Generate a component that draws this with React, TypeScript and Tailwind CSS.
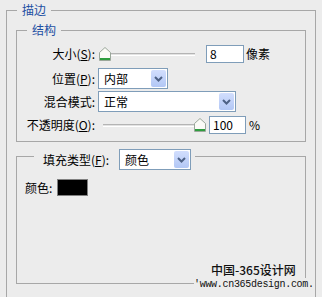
import React from 'react';

const FONT = { fontFamily: '"Noto Sans CJK SC", "Noto Sans", sans-serif' };

const Chevron = () => (
  <svg width="9" height="6" viewBox="0 0 9 6">
    <path d="M1 1 L4.5 4.5 L8 1" fill="none" stroke="#4d6185" strokeWidth="2" />
  </svg>
);

const Select: React.FC<{ value: string; width: string }> = ({ value, width }) => (
  <div className={`flex h-[21px] ${width} shrink-0 border border-[#7f9db9] bg-white`}>
    <span className="flex-1 pl-[5px] text-[12px] leading-[19px] text-black">{value}</span>
    <div className="m-px flex w-[15px] items-center justify-center rounded-[2px] bg-gradient-to-b from-[#d2defd] to-[#b2c7f5]">
      <Chevron />
    </div>
  </div>
);

const Thumb = () => (
  <svg width="12" height="14" viewBox="0 0 12 14">
    <path d="M0.5 5.5 L6 0.5 L11.5 5.5 L11.5 13.5 L0.5 13.5 Z" fill="#fbfbf7" stroke="#9aa79a" />
    <rect x="1" y="11" width="10" height="2" fill="#2f9d3f" />
  </svg>
);

const Input: React.FC<{ value: string; width: string }> = ({ value, width }) => (
  <div className={`h-[18px] ${width} shrink-0 border border-[#7f9db9] bg-white pl-[3px] text-[12px] leading-[16px] text-black`}>
    {value}
  </div>
);

const Track: React.FC<{ width: string }> = ({ width }) => (
  <div className={`${width} h-[3px] border-t border-[#b4b4b4] border-b border-b-white bg-[#e2e2e2]`} />
);

const App: React.FC = () => {
  return (
    <div
      className="relative h-[297px] w-[322px] overflow-hidden bg-[#ececec] px-[6px] pt-[3px] text-[12px] text-black"
      style={FONT}
    >
      <fieldset className="h-[330px] border border-[#a7a7a7] px-[9px] pt-[6px]">
        <legend className="ml-[1px] px-[5px] text-[12px] leading-[14px] text-[#1d4fa3]">描边</legend>

        {/* 结构 */}
        <fieldset className="border border-[#a7a7a7] pt-[8px] pb-[7px]">
          <legend className="ml-[10px] px-[5px] text-[12px] leading-[14px] text-[#1d4fa3]">结构</legend>

          <div className="flex h-[18px] items-center">
            <span className="w-[78px] text-right">
              大小(<span className="underline">S</span>):
            </span>
            <div className="relative ml-[4px] flex h-[18px] w-[96px] items-center">
              <Track width="w-full" />
              <div className="absolute left-0 top-[2px]">
                <Thumb />
              </div>
            </div>
            <div className="ml-[11px]">
              <Input value="8" width="w-[38px]" />
            </div>
            <span className="ml-[2px]">像素</span>
          </div>

          <div className="mt-[5px] flex h-[21px] items-center">
            <span className="w-[78px] text-right">
              位置(<span className="underline">P</span>):
            </span>
            <div className="ml-[3px]">
              <Select value="内部" width="w-[70px]" />
            </div>
          </div>

          <div className="mt-[2px] flex h-[21px] items-center">
            <span className="w-[78px] text-right">混合模式:</span>
            <div className="ml-[3px]">
              <Select value="正常" width="w-[138px]" />
            </div>
          </div>

          <div className="mt-[4px] flex h-[18px] items-center">
            <span className="w-[78px] whitespace-nowrap text-right">
              不透明度(<span className="underline">O</span>):
            </span>
            <div className="relative ml-[8px] flex h-[18px] w-[103px] items-center">
              <Track width="w-[97px]" />
              <div className="absolute right-0 top-[2px]">
                <Thumb />
              </div>
            </div>
            <div className="ml-[3px]">
              <Input value="100" width="w-[37px]" />
            </div>
            <span className="ml-[3px]">%</span>
          </div>
        </fieldset>

        {/* 填充类型 */}
        <fieldset className="mt-[7px] h-[135px] border border-[#a7a7a7] pt-[16px] pl-[8px]">
          <legend className="ml-[9px] h-[14px] pl-[9px] pr-[4px]">
            <div className="flex h-[21px] items-center">
              <span className="w-[60px] whitespace-nowrap">
                填充类型(<span className="underline">F</span>):
              </span>
              <div className="ml-[16px]">
                <Select value="颜色" width="w-[72px]" />
              </div>
            </div>
          </legend>
          <div className="flex h-[17px] items-center">
            <span>颜色:</span>
            <div className="ml-[5px] h-[17px] w-[31px] border border-[#808080] bg-black" />
          </div>
        </fieldset>
      </fieldset>

      {/* watermark */}
      <div className="absolute left-[211px] top-[263px] text-[12px] font-medium leading-[14px] text-[#111]">
        中国-365设计网
      </div>
      <div
        className="absolute left-[194px] top-[278px] bg-[#ececec] text-[10px] leading-[13px] tracking-[-0.3px] text-[#111]"
        style={{ fontFamily: '"Liberation Mono", monospace' }}
      >
        'www.cn365design.com.
      </div>
    </div>
  );
};

export default App;
